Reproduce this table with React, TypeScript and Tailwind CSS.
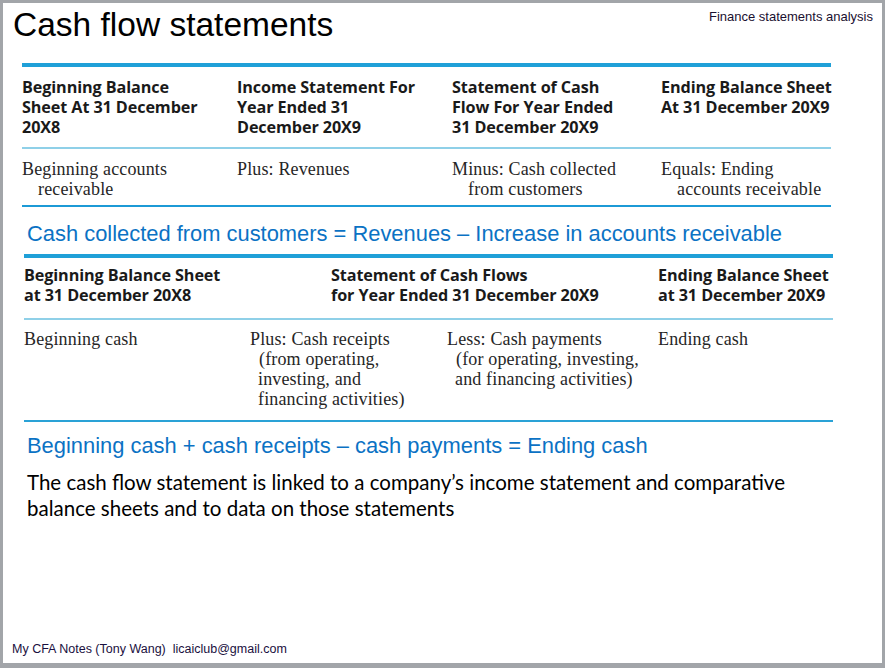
import React from "react";

const sans = "font-['Liberation_Sans',Arial,sans-serif]";
const head = "font-['Open_Sans','Noto_Sans',sans-serif] font-bold text-[16.2px] leading-[20px] text-[#1a1a1a] tracking-[-0.1px] whitespace-nowrap";
const serif = "font-['Liberation_Serif','Times_New_Roman',serif] text-[18px] leading-[20px] text-[#262626] tracking-[0.15px] whitespace-nowrap";

function Cell({ first, rest }: { first: string; rest?: string[] }) {
  return (
    <div className={serif}>
      <div>{first}</div>
      {rest?.map((r, i) => (
        <div key={i} className="pl-[16px]">
          {r}
        </div>
      ))}
    </div>
  );
}

export default function App() {
  return (
    <div className="w-[885px] h-[668px] bg-[#a2a5a9] pt-[3px] pl-[3px] pr-[3px] pb-[5px]">
      <div className="w-full h-full bg-white flex flex-col relative">
        {/* header */}
        <div className="flex justify-between items-start">
          <h1 className={`${sans} text-[33.5px] leading-[36px] text-black pl-[10px] pt-[4px]`}>
            Cash flow statements
          </h1>
          <div className={`${sans} text-[13px] leading-[14px] text-[#1a1030] pr-[9px] pt-[7px]`}>
            Finance statements analysis
          </div>
        </div>

        {/* table 1 */}
        <div className="ml-[19px] w-[809px] mt-[20px]">
          <div className="h-[4px] bg-[#1fa0d8]" />
          <div className="grid grid-cols-[215px_215px_209px_170px] pt-[10px] pb-[10px]">
            <div className={head}>
              Beginning Balance
              <br />
              Sheet At 31 December
              <br />
              20X8
            </div>
            <div className={head}>
              Income Statement For
              <br />
              Year Ended 31
              <br />
              December 20X9
            </div>
            <div className={head}>
              Statement of Cash
              <br />
              Flow For Year Ended
              <br />
              31 December 20X9
            </div>
            <div className={head}>
              Ending Balance Sheet
              <br />
              At 31 December 20X9
            </div>
          </div>
          <div className="h-[2px] bg-[#8fd0e8]" />
          <div className="grid grid-cols-[215px_215px_209px_170px] pt-[10px] pb-[6px]">
            <Cell first="Beginning accounts" rest={["receivable"]} />
            <Cell first="Plus: Revenues" />
            <Cell first="Minus: Cash collected" rest={["from customers"]} />
            <Cell first="Equals: Ending" rest={["accounts receivable"]} />
          </div>
          <div className="h-[2px] bg-[#1c9ad6]" />
        </div>

        <div className={`${sans} text-[21.9px] leading-[24px] text-[#0b72c4] pl-[24px] mt-[15px] whitespace-nowrap`}>
          Cash collected from customers = Revenues – Increase in accounts receivable
        </div>

        {/* table 2 */}
        <div className="ml-[21px] w-[809px] mt-[8px]">
          <div className="h-[4px] bg-[#1fa0d8]" />
          <div className="grid grid-cols-[307px_327px_175px] pt-[7px] pb-[13px]">
            <div className={head}>
              Beginning Balance Sheet
              <br />
              at 31 December 20X8
            </div>
            <div className={head}>
              Statement of Cash Flows
              <br />
              for Year Ended 31 December 20X9
            </div>
            <div className={head}>
              Ending Balance Sheet
              <br />
              at 31 December 20X9
            </div>
          </div>
          <div className="h-[2px] bg-[#8fd0e8]" />
          <div className="grid grid-cols-[226px_197px_211px_175px] pt-[9px] pb-[11px]">
            <Cell first="Beginning cash" />
            <div className={serif}>
              <div>Plus: Cash receipts</div>
              <div className="pl-[9px]">(from operating,</div>
              <div className="pl-[8px]">investing, and</div>
              <div className="pl-[8px]">financing activities)</div>
            </div>
            <div className={serif}>
              <div>Less: Cash payments</div>
              <div className="pl-[9px]">(for operating, investing,</div>
              <div className="pl-[8px]">and financing activities)</div>
            </div>
            <Cell first="Ending cash" />
          </div>
          <div className="h-[2px] bg-[#2aa2d6]" />
        </div>

        <div className={`${sans} text-[21.9px] leading-[24px] text-[#0b72c4] pl-[24px] mt-[12px] whitespace-nowrap`}>
          Beginning cash + cash receipts – cash payments = Ending cash
        </div>

        <div className="font-['Lato','Open_Sans',sans-serif] text-[20.5px] leading-[26px] text-black pl-[24px] mt-[11px]">
          The cash flow statement is linked to a company’s income statement and comparative
          <br />
          balance sheets and to data on those statements
        </div>

        <div className="flex-1" />
        <div className={`${sans} text-[12.5px] leading-[14px] text-[#1a1040] pl-[9px] pb-[7px]`}>
          My CFA Notes (Tony Wang)&nbsp; licaiclub@gmail.com
        </div>
      </div>
    </div>
  );
}
